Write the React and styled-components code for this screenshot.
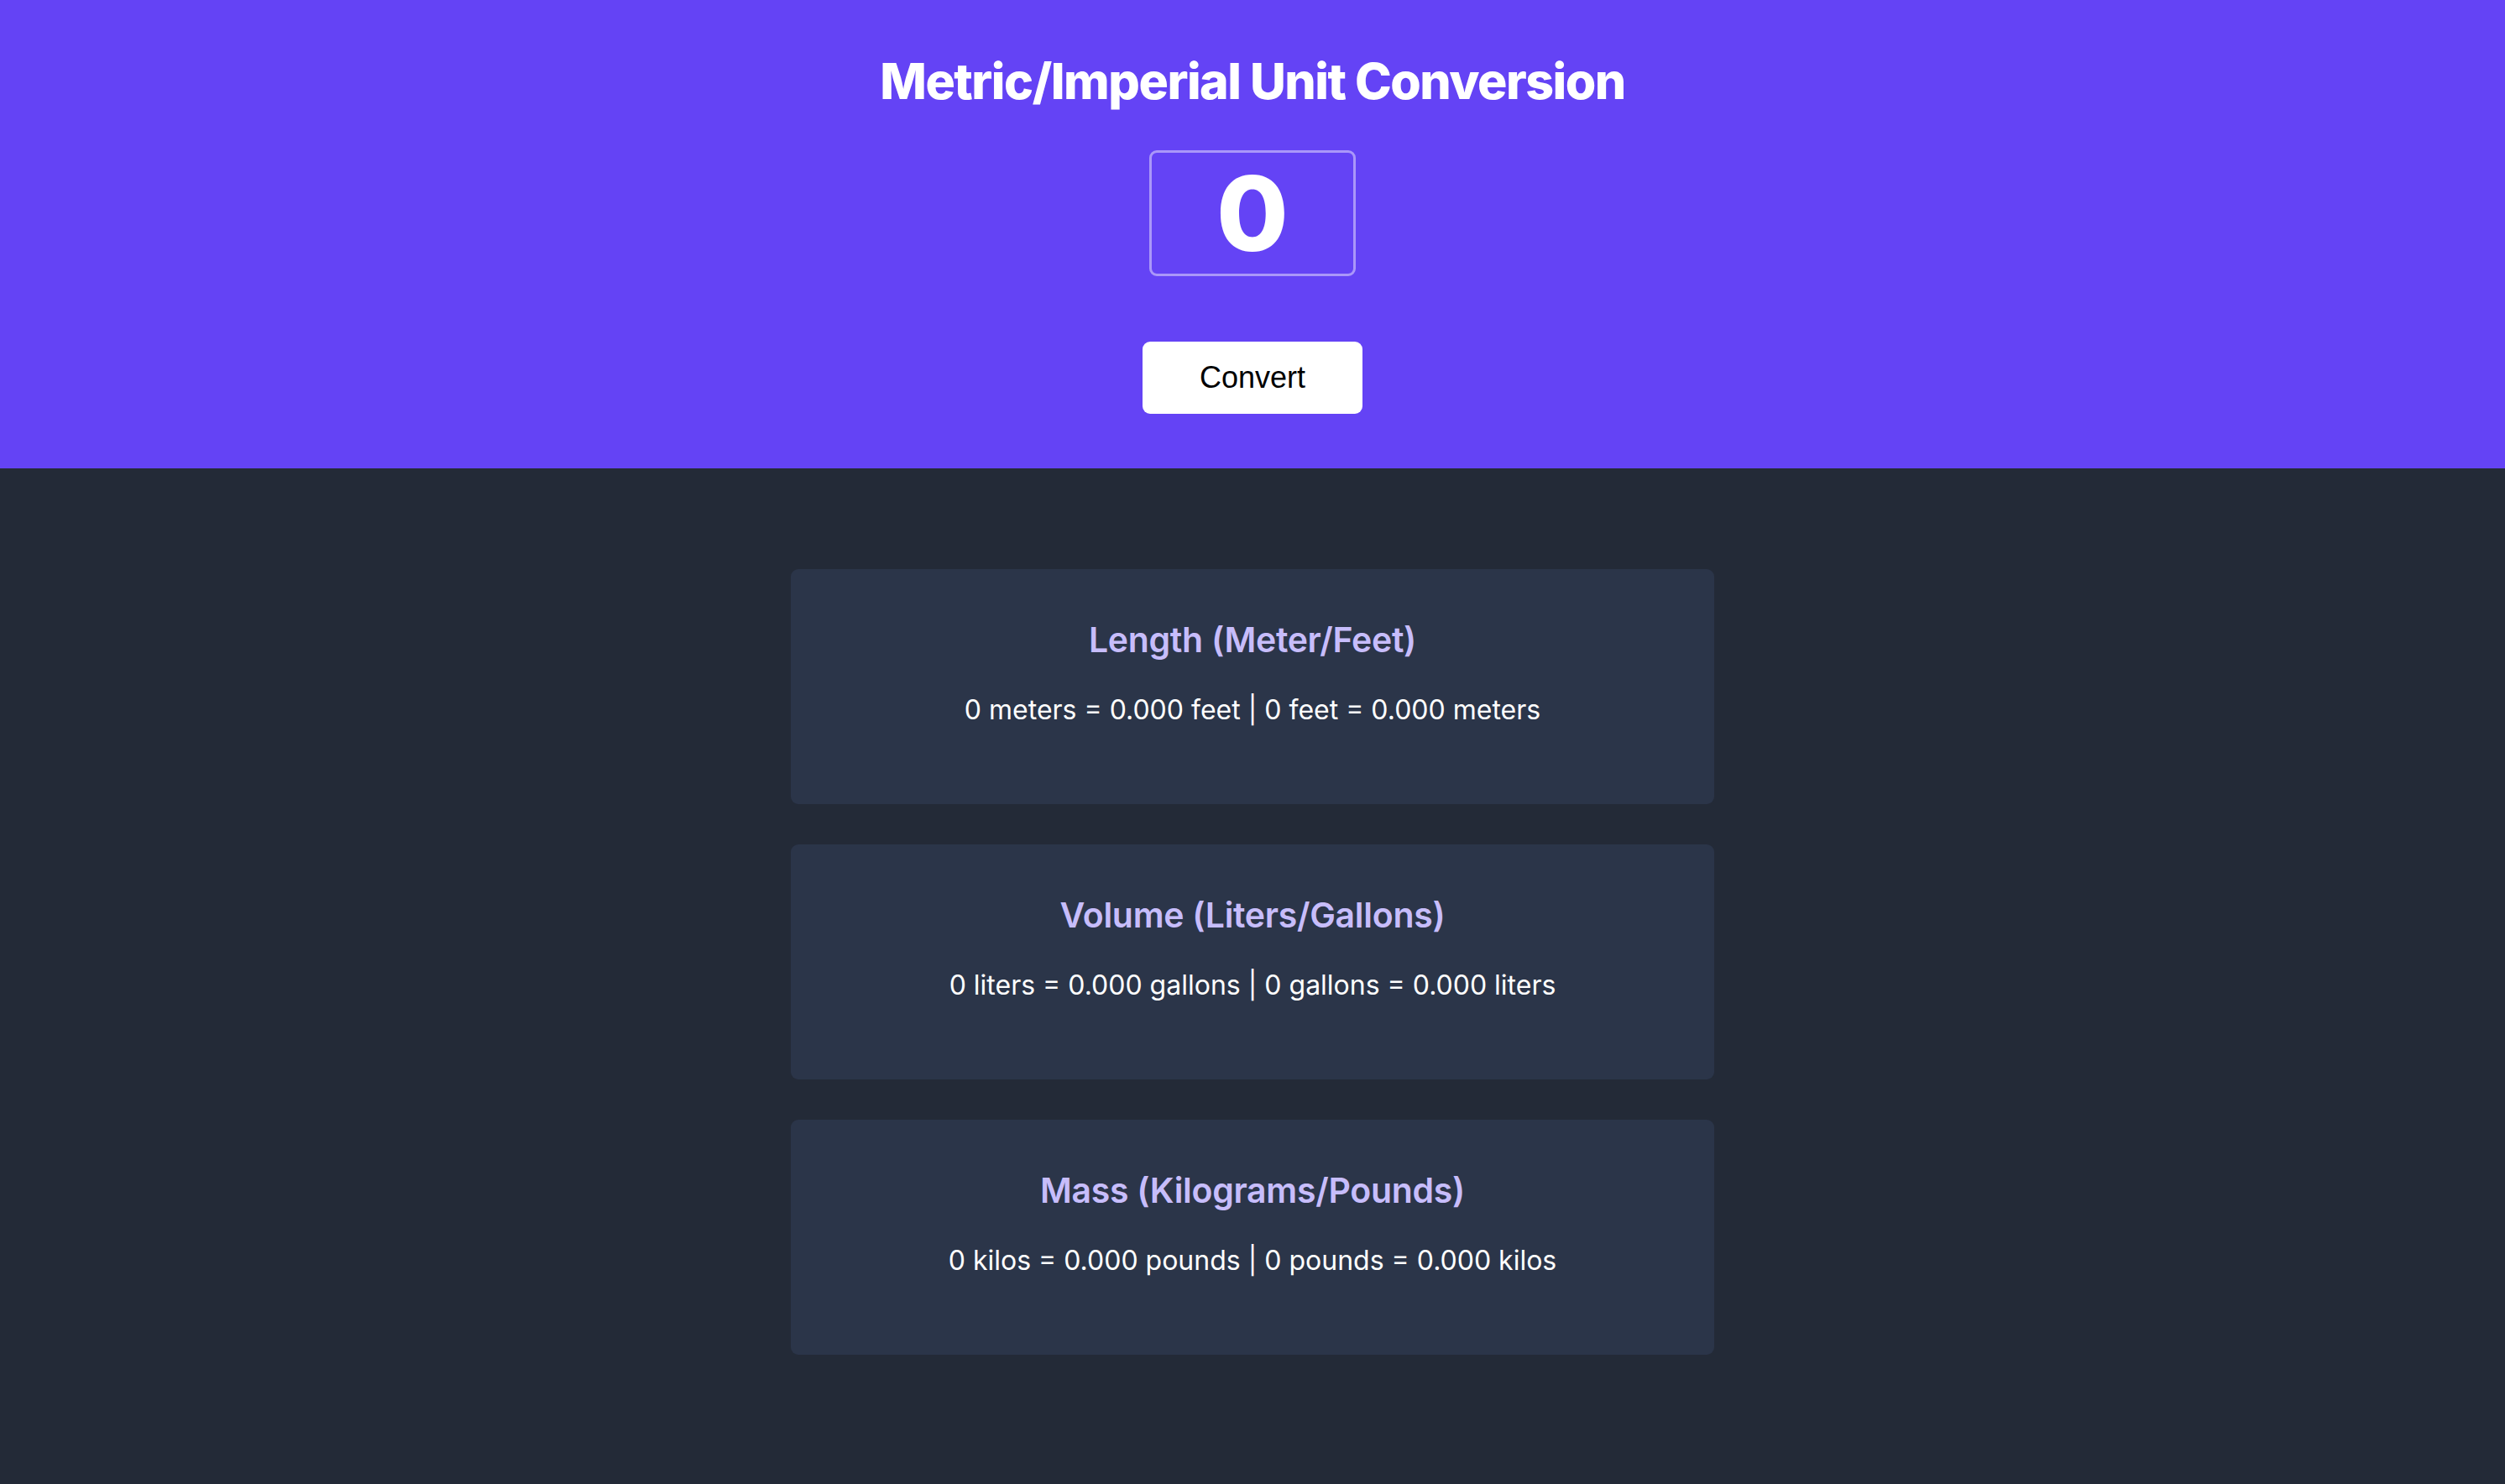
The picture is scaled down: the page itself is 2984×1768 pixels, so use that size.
import React, {useState} from 'react';
import styled, {createGlobalStyle} from 'styled-components';

const GlobalStyle = createGlobalStyle`
  html, body {
    margin: 0;
    padding: 0;
    background-color: #232a37;
  }
  * {
    box-sizing: border-box;
  }
`;

const Page = styled.div`
  min-height: 100vh;
  background-color: #232a37;
  font-family: Inter, 'Noto Sans', sans-serif;
`;

const Header = styled.header`
  display: flex;
  flex-direction: column;
  align-items: center;
  background-color: #6443f5;
  padding: 61px 0 65px;
`;

const Title = styled.h1`
  margin: 0;
  color: #fff;
  font-size: 59px;
  font-weight: 800;
  letter-spacing: -1.5px;
`;

const NumberInput = styled.input`
  margin-top: 47px;
  width: 246px;
  height: 150px;
  border: 3px solid rgba(255, 255, 255, 0.45);
  border-radius: 9px;
  background: transparent;
  color: #fff;
  font-family: Inter, sans-serif;
  font-size: 124px;
  font-weight: 800;
  text-align: center;
  outline: none;
  padding: 0;
`;

const ConvertButton = styled.button`
  margin-top: 78px;
  width: 262px;
  height: 86px;
  border: none;
  border-radius: 9px;
  background-color: #fff;
  color: #000;
  font-family: 'Liberation Sans', Arial, sans-serif;
  font-size: 36px;
  cursor: pointer;
`;

const Results = styled.main`
  display: flex;
  flex-direction: column;
  align-items: center;
  gap: 48px;
  padding: 120px 0 80px;
`;

const Card = styled.section`
  width: 1100px;
  height: 280px;
  background-color: #2b3549;
  border-radius: 9px;
  padding-top: 59px;
  text-align: center;
`;

const CardTitle = styled.h2`
  margin: 0;
  color: #c7bdfb;
  font-size: 41px;
  font-weight: 600;
  letter-spacing: -0.3px;
`;

const CardText = styled.p`
  margin: 39px 0 0;
  color: #fff;
  font-size: 32px;
  font-weight: 400;
`;

const units = [
  {title: 'Length (Meter/Feet)', a: 'meters', b: 'feet', factor: 3.28084},
  {title: 'Volume (Liters/Gallons)', a: 'liters', b: 'gallons', factor: 0.264172},
  {title: 'Mass (Kilograms/Pounds)', a: 'kilos', b: 'pounds', factor: 2.20462},
];

const App = () => {
  const [input, setInput] = useState('0');
  const [value, setValue] = useState(0);

  return (
    <Page>
      <GlobalStyle />
      <Header>
        <Title>Metric/Imperial Unit Conversion</Title>
        <NumberInput
          type="text"
          value={input}
          onChange={e => setInput(e.target.value)}
        />
        <ConvertButton onClick={() => setValue(Number(input) || 0)}>
          Convert
        </ConvertButton>
      </Header>
      <Results>
        {units.map(({title, a, b, factor}) => (
          <Card key={title}>
            <CardTitle>{title}</CardTitle>
            <CardText>
              {value} {a} = {(value * factor).toFixed(3)} {b} | {value} {b} ={' '}
              {(value / factor).toFixed(3)} {a}
            </CardText>
          </Card>
        ))}
      </Results>
    </Page>
  );
};

export default App;
